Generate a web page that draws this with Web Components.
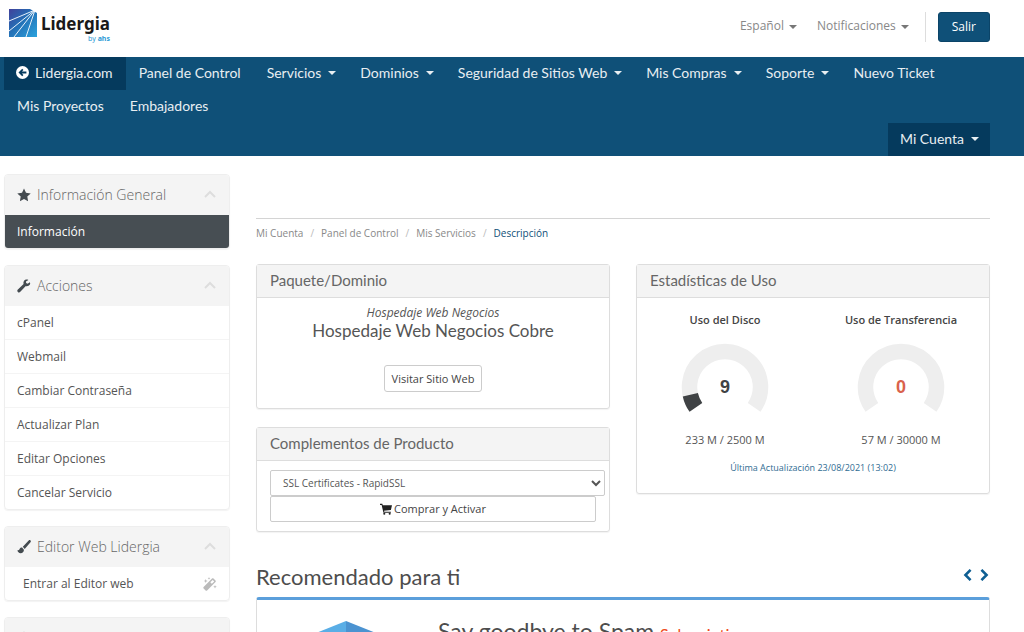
<!DOCTYPE html>
<html lang="es">
<head>
<meta charset="utf-8">
<title>Lidergia - Área de cliente</title>
<style>
body { margin: 0; height: 100vh; overflow: hidden; background: #fff; }
</style>
</head>
<body>
<client-area></client-area>
<script>
const define = (name, html, setup) => customElements.define(name, class extends HTMLElement {
  connectedCallback() {
    if (this.shadowRoot) return;
    const root = this.attachShadow({ mode: 'open' });
    const template = document.createElement('template');
    template.innerHTML = html;
    root.append(template.content.cloneNode(true));
    if (setup) setup(this, root);
  }
});

define('down-caret', `
<style>
:host { display: inline-block; width: 0; height: 0; border: 4px solid transparent; border-top-color: currentColor; border-bottom: 0; vertical-align: middle; }
</style>`);

const icons = {
  star: '<path d="M7 0.6l2 4.2 4.7.6-3.4 3.2.8 4.6L7 11l-4.1 2.2.8-4.6L.3 5.4l4.7-.6z"/>',
  wrench: '<path d="M12.9 3.2l-2.3 1.6-1.5-.8-.1-1.6L11.400.9C9.600.1 7.500.7 6.700 2.400c-.4.9-.4 1.800-.1 2.600L.9 10.500c-.8.7-.8 1.700-.1 2.400.7.7 1.800.7 2.500-.1l5.500-5.800c.9.3 1.900.2 2.800-.3 1.400-.7 2-2.100 1.300-3.500z"/>',
  brush: '<path d="M13.500.5c-.6-.6-1.300-.4-1.800 0L5.800 6.800l1.900 2.200 5.800-6.700c.5-.6.5-1.300 0-1.800zM5.100 7.500C3.700 7.400 2.900 8 2.500 9.200c-.3.900-1 1.300-2.100 1.100.3 1.700 1.500 2.900 3.200 2.900 2.100 0 3.500-1.400 3.300-3.500z"/>',
  back: '<path fill-rule="evenodd" d="M7 0a7 7 0 1 0 0 14A7 7 0 0 0 7 0zM2.700 7l4-4 1.300 1.300-1.600 1.600h4.800v2.200H6.400L8 9.700 6.700 11z"/>',
  cart: '<path d="M0 1h2.700l.5 1.500H14l-1.300 5.700-8 .9.3 1.100h7.700v1.200H4L1.900 2.200H0z"/><circle cx="5" cy="12.500" r="1.200"/><circle cx="11.300" cy="12.500" r="1.200"/>',
  wand: '<path fill-rule="evenodd" d="M10.500 1.600l2 2c.5.5.5 1 0 1.500l-8.400 8.300c-.5.500-1 .5-1.500 0l-2-2c-.5-.5-.5-1 0-1.500L9 1.600c.5-.5 1-.5 1.500 0zM9.700 2.900L7.300 5.300l1.500 1.500 2.400-2.400z"/><path d="M2.700 2l.6 1.400 1.400.6-1.400.6-.6 1.400-.6-1.400L.700 4l1.400-.6zM6 0l.4 1 1 .4-1 .4-.4 1-.4-1-1-.4 1-.4zM12 8l.5 1.300 1.300.5-1.300.5L12 11.600l-.5-1.300-1.300-.5 1.300-.5z"/>',
  up: '<path fill="none" stroke="currentColor" stroke-width="2" d="M2 9l5-5 5 5"/>',
  left: '<path fill="none" stroke="currentColor" stroke-width="3" d="M10 1L4 7l6 6"/>',
  right: '<path fill="none" stroke="currentColor" stroke-width="3" d="M4 1l6 6-6 6"/>'
};
define('glyph-icon', `
<style>
:host { display: inline-block; width: 14px; height: 14px; flex: none; }
svg { display: block; width: 100%; height: 100%; fill: currentColor; }
</style>
<svg viewBox="0 0 14 14" aria-hidden="true"></svg>`,
(el, root) => { root.querySelector('svg').innerHTML = icons[el.getAttribute('name')]; });

define('brand-logo', `
<style>
:host { display: block; }
a { display: flex; gap: 4px; color: #1a1a1a; text-decoration: none; }
svg { width: 28px; height: 28px; }
.name { display: grid; justify-items: end; font: bold 17px/30px "Noto Sans", sans-serif; }
.by { margin-top: -4px; font-size: 7px; line-height: 8px; font-weight: normal; color: #2b9ad6; }
</style>
<a href="#">
<svg viewBox="0 0 28 28" aria-hidden="true">
<defs><linearGradient id="g" x1="0" y1="0" x2="1" y2="1"><stop offset="0" stop-color="#41409a"/><stop offset=".45" stop-color="#2370b6"/><stop offset="1" stop-color="#2ba3dd"/></linearGradient></defs>
<path fill="url(#g)" d="M0 0h28v28H0z"/>
<path fill="none" stroke="#e6f0fa" stroke-width="1" d="M26 1L0 12M26 1L0 22M26 1L5 28M26 1L17 28"/>
<path fill="#fff" d="M21 0h7v4z"/>
</svg>
<span class="name">Lidergia<span class="by">by <b>ahs</b></span></span>
</a>`);

define('top-bar', `
<style>
:host { display: flex; justify-content: space-between; padding: 9px 34px 0 9px; height: 48px; font: 12px/18px "Open Sans", sans-serif; color: #888; }
nav { display: flex; align-items: flex-start; padding-top: 3px; }
a { color: inherit; text-decoration: none; padding: 5px 0; margin-right: 20px; }
a:nth-of-type(2) { margin-right: 16px; }
down-caret { margin-left: 5px; color: #777; }
.out { border-left: 1px solid #ddd; padding-left: 12px; }
button { font: inherit; color: #fff; background: #0f5078; border: 1px solid #0b4468; border-radius: 3px; padding: 5px 13px; height: 30px; display: block; }
</style>
<brand-logo></brand-logo>
<nav><a href="#">Español<down-caret></down-caret></a><a href="#">Notificaciones<down-caret></down-caret></a><span class="out"><button type="button">Salir</button></span></nav>`);

define('nav-item', `
<style>
:host { display: block; }
a { display: flex; align-items: center; box-sizing: border-box; height: 33px; padding: 0 13px 2px; color: #e8eef2; text-decoration: none; white-space: nowrap; }
:host([active]) a { background: #053a5d; padding-left: 12px; }
:host([menu]) a { padding-right: 11px; }
glyph-icon { margin-right: 6px; color: #fff; width: 13px; height: 13px; }
down-caret { margin-left: 7px; }
</style>
<a href="#"><slot></slot></a>`,
(el, root) => {
  if (el.hasAttribute('menu')) root.querySelector('a').append(document.createElement('down-caret'));
  if (el.hasAttribute('icon')) {
    const i = document.createElement('glyph-icon');
    i.setAttribute('name', el.getAttribute('icon'));
    root.querySelector('a').prepend(i);
  }
});

define('main-nav', `
<style>
:host { display: block; background: #0f5078; padding: 0 34px 0 4px; font: 14px/20px Lato, sans-serif; }
nav, .account { display: flex; flex-wrap: wrap; }
.account { justify-content: flex-end; }
</style>
<nav>
<nav-item active icon="back">Lidergia.com</nav-item><nav-item>Panel de Control</nav-item><nav-item menu>Servicios</nav-item><nav-item menu>Dominios</nav-item><nav-item menu>Seguridad de Sitios Web</nav-item><nav-item menu>Mis Compras</nav-item><nav-item menu>Soporte</nav-item><nav-item>Nuevo Ticket</nav-item><nav-item>Mis Proyectos</nav-item><nav-item>Embajadores</nav-item>
</nav>
<div class="account"><nav-item active menu>Mi Cuenta</nav-item></div>`);

define('side-panel', `
<style>
:host { display: block; border: 1px solid #eee; border-radius: 4px; overflow: hidden; box-shadow: 0 1px 1px rgba(0,0,0,.05); }
h2 { margin: 0; display: flex; align-items: center; height: 39px; padding: 0 12px; background: #f4f4f4; color: #666; font: 300 14px/20px "Open Sans", sans-serif; }
h2 > glyph-icon:first-child { color: #444b50; margin-right: 6px; }
h2 > glyph-icon:last-child { color: #ddd; margin-left: auto; }
</style>
<h2><glyph-icon></glyph-icon><span></span><glyph-icon name="up"></glyph-icon></h2>
<slot></slot>`,
(el, root) => {
  const icon = document.createElement('glyph-icon');
  icon.setAttribute('name', el.getAttribute('icon'));
  root.querySelector('h2 > glyph-icon').replaceWith(icon);
  root.querySelector('span').textContent = el.getAttribute('heading');
});

define('side-item', `
<style>
:host { display: block; border-top: 1px solid #f4f4f4; }
a { display: flex; align-items: center; justify-content: space-between; height: 33px; padding: 0 12px; color: #555; text-decoration: none; font: 12px/18px "Open Sans", sans-serif; }
:host([active]) a { background: #474e53; color: #fff; }
:host([inset]) a { padding-left: 18px; }
::slotted(glyph-icon) { color: #bbb; }
</style>
<a href="#"><slot></slot></a>`);

define('side-bar', `
<style>
:host { display: grid; gap: 16px; align-content: start; }
</style>
<side-panel icon="star" heading="Información General"><side-item active>Información</side-item></side-panel>
<side-panel icon="wrench" heading="Acciones"><side-item>cPanel</side-item><side-item>Webmail</side-item><side-item>Cambiar Contraseña</side-item><side-item>Actualizar Plan</side-item><side-item>Editar Opciones</side-item><side-item>Cancelar Servicio</side-item></side-panel>
<side-panel icon="brush" heading="Editor Web Lidergia"><side-item inset>Entrar al Editor web<glyph-icon name="wand"></glyph-icon></side-item></side-panel>
<side-panel icon="star" heading=""></side-panel>`);

define('crumb-trail', `
<style>
:host { display: block; border-top: 1px solid #d4d4d4; padding-top: 6px; font: 10px/16px "Open Sans", sans-serif; color: #888; }
ol { display: flex; margin: 0; padding: 0; list-style: none; }
li + li::before { content: "/"; padding: 0 7px; color: #bbb; }
a { color: inherit; text-decoration: none; }
[aria-current] { color: #0f5078; }
</style>
<nav><ol><li><a href="#">Mi Cuenta</a></li><li><a href="#">Panel de Control</a></li><li><a href="#">Mis Servicios</a></li><li><a href="#" aria-current="page">Descripción</a></li></ol></nav>`);

define('content-panel', `
<style>
:host { display: block; border: 1px solid #ddd; border-radius: 3px; box-shadow: 0 1px 1px rgba(0,0,0,.05); }
h3 { margin: 0; padding: 5px 13px 7px; background: #f4f4f4; border-bottom: 1px solid #ddd; color: #666; font: 15px/20px Lato, sans-serif; }
</style>
<h3></h3><slot></slot>`,
(el, root) => { root.querySelector('h3').textContent = el.getAttribute('heading'); });

define('package-info', `
<style>
:host { display: flex; flex-direction: column; align-items: center; padding: 7px 13px 16px; font: 11px/16px "Open Sans", sans-serif; color: #555; }
em { font-size: 12px; }
h4 { margin: 0 0 24px; font: 17px/20px Lato, sans-serif; }
button { font: inherit; color: #444; background: #fff; border: 1px solid #ccc; border-radius: 3px; height: 27px; padding: 0 7px; }
</style>
<em>Hospedaje Web Negocios</em>
<h4>Hospedaje Web Negocios Cobre</h4>
<button type="button">Visitar Sitio Web</button>`);

define('addon-form', `
<style>
:host { display: block; padding: 9px 4px 9px 13px; }
form { display: grid; }
select, button { box-sizing: border-box; height: 26px; font: 10px/16px "Open Sans", sans-serif; color: #555; background: #fff; border: 1px solid #ccc; border-radius: 2px; }
select { width: 100%; padding: 0 0 0 8px; }
button { display: flex; align-items: center; justify-content: center; gap: 2px; margin-right: 9px; color: #444; font-size: 11px; }
glyph-icon { width: 12px; height: 12px; color: #222; }
</style>
<form><select aria-label="Complemento"><option>SSL Certificates - RapidSSL</option></select>
<button type="button"><glyph-icon name="cart"></glyph-icon>Comprar y Activar</button></form>`);

define('usage-gauge', `
<style>
:host { display: grid; justify-items: center; color: #555; font: 11px/16px "Open Sans", sans-serif; }
h4 { margin: 0 0 15px; font: 600 11px/16px "Open Sans", sans-serif; color: #444; }
.dial { display: grid; place-items: center; margin-bottom: 1px; }
.dial > * { grid-area: 1 / 1; }
svg { display: block; width: 88px; height: 88px; }
path { fill: none; stroke-width: 15.500; }
output { font: bold 18px/20px "Liberation Sans", sans-serif; color: var(--tone); }
</style>
<h4></h4>
<div class="dial"><svg viewBox="0 0 88 88" aria-hidden="true"><path stroke="#eee" d="M14.900 64.400A35.500 35.500 0 1 1 73.100 64.400"/><path class="value" pathLength="100" d="M14.900 64.400A35.500 35.500 0 1 1 73.100 64.400"/></svg><output></output></div>
<slot></slot>`,
(el, root) => {
  const value = +el.getAttribute('value');
  root.querySelector('h4').textContent = el.getAttribute('heading');
  root.querySelector('output').textContent = value;
  const arc = root.querySelector('.value');
  arc.style.stroke = value ? 'var(--tone)' : 'none';
  arc.setAttribute('stroke-dasharray', value + ' 200');
});

define('usage-stats', `
<style>
:host { display: block; padding: 14px 0 17px; text-align: center; }
.gauges { display: grid; grid-template-columns: 1fr 1fr; }
p { margin: 12px 0 0; font: 9px/16px "Open Sans", sans-serif; color: #2f6c92; }
</style>
<div class="gauges"><usage-gauge heading="Uso del Disco" value="9" style="--tone:#3f4244">233 M / 2500 M</usage-gauge><usage-gauge heading="Uso de Transferencia" value="0" style="--tone:#d9624c">57 M / 30000 M</usage-gauge></div>
<p>Última Actualización 23/08/2021 (13:02)</p>`);

define('recommended-box', `
<style>
:host { display: block; color: #4d4d4d; font-family: Lato, sans-serif; }
header { display: flex; justify-content: space-between; }
h2 { margin: 0 0 7px; font: 22px/26px Lato, sans-serif; }
.arrows { display: flex; gap: 4px; padding-top: 5px; }
button { border: 0; padding: 0; background: none; color: #0f5f93; height: 12px; }
button glyph-icon { display: block; width: 12px; height: 12px; }
.card { border: 1px solid #ddd; border-top: 3px solid #5b9fdb; border-radius: 3px; padding: 21px 13px 30px 59px; display: flex; gap: 62px; }
svg { width: 60px; height: 60px; flex: none; }
h3 { margin: 0; font: 23px/20px Lato, sans-serif; }
small { font-size: 16px; color: #f04a20; }
</style>
<header><h2>Recomendado para ti</h2><div class="arrows"><button type="button" aria-label="Anterior"><glyph-icon name="left"></glyph-icon></button><button type="button" aria-label="Siguiente"><glyph-icon name="right"></glyph-icon></button></div></header>
<div class="card"><svg viewBox="0 0 60 60" aria-hidden="true"><path fill="#5aaee6" d="M30 0L0 12v36l30 12z"/><path fill="#4b93d1" d="M30 0l30 12v36L30 60z"/></svg><h3>Say goodbye to Spam <small>Subscription</small></h3></div>`);

define('client-area', `
<style>
:host { display: block; }
.body { display: grid; grid-template-columns: 226px minmax(0, 1fr); gap: 26px; padding: 18px 34px 0 4px; }
main { padding-top: 44px; }
.panels { display: grid; grid-template-columns: 1fr 1fr; gap: 26px; margin: 23px 0 32px; align-items: start; }
.stack { display: grid; gap: 18px; }
</style>
<top-bar></top-bar>
<main-nav></main-nav>
<div class="body"><side-bar></side-bar>
<main><crumb-trail></crumb-trail>
<div class="panels"><div class="stack"><content-panel heading="Paquete/Dominio"><package-info></package-info></content-panel><content-panel heading="Complementos de Producto"><addon-form></addon-form></content-panel></div>
<content-panel heading="Estadísticas de Uso"><usage-stats></usage-stats></content-panel></div>
<recommended-box></recommended-box></main></div>`);
</script>
</body>
</html>
